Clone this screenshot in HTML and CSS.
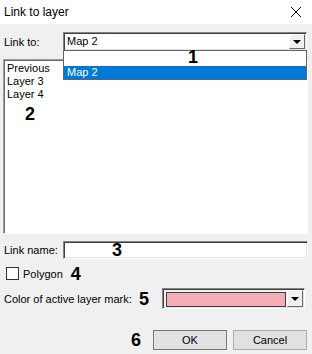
FILE: index.html
```html
<!DOCTYPE html>
<html lang="en">

<head>
	<meta charset="UTF-8">
	<meta name="viewport" content="width=device-width, initial-scale=1.0">
	<title>Link to layer</title>
	<link rel="stylesheet" href="styles.css">
</head>

<body>
	<div class="dialog">
		<div class="titlebar">
			<span class="title">Link to layer</span>
			<svg class="close" width="12" height="12" viewBox="0 0 12 12">
				<path d="M1 1 L11 11 M11 1 L1 11" stroke="#000" stroke-width="1" fill="none" />
			</svg>
		</div>

		<div class="content">
			<div class="row row-link">
				<span class="label">Link to:</span>
				<div class="combo combo-link">
					<span class="combo-text">Map 2</span>
					<span class="drop-btn"><span class="arrow"></span></span>
					<ul class="drop-list">
						<li class="blank"></li>
						<li class="selected">Map 2</li>
					</ul>
					<span class="mark mark-1">1</span>
				</div>
			</div>

			<div class="listbox">
				<div class="item">Previous</div>
				<div class="item">Layer 3</div>
				<div class="item">Layer 4</div>
				<span class="mark mark-2">2</span>
			</div>

			<div class="row row-name">
				<span class="label">Link name:</span>
				<div class="textbox">
					<span class="mark mark-3">3</span>
				</div>
			</div>

			<div class="row row-polygon">
				<span class="checkbox"></span>
				<span class="check-label">Polygon</span>
				<span class="mark mark-4">4</span>
			</div>

			<div class="row row-color">
				<span class="label">Color of active layer mark:</span>
				<span class="mark mark-5">5</span>
				<div class="combo combo-color">
					<span class="swatch"></span>
					<span class="drop-btn"><span class="arrow"></span></span>
				</div>
			</div>

			<div class="row row-buttons">
				<span class="mark mark-6">6</span>
				<button class="btn btn-ok">OK</button>
				<button class="btn">Cancel</button>
			</div>
		</div>
	</div>
</body>

</html>
```

FILE: styles.css
```css
body {
	margin: 0;
	font-family: "Liberation Sans", Arial, sans-serif;
	font-size: 11px;
	color: #000;
	background-color: #f0f0f0;
}

.dialog {
	width: 312px;
	height: 354px;
	background-color: #f0f0f0;
	overflow: hidden;
}

.titlebar {
	height: 24px;
	background-color: #fff;
	display: flex;
	align-items: center;
	justify-content: space-between;
	padding: 0 10px 0 4px;
}

.title {
	font-size: 12px;
}

.close {
	display: block;
}

.content {
	padding: 0 4px 0 3px;
}

.row {
	display: flex;
	align-items: center;
}

.label {
	padding-left: 1px;
	flex: none;
}

.mark {
	font-size: 18px;
	font-weight: bold;
	line-height: 18px;
}

/* link to */
.row-link {
	margin-top: 8px;
}

.row-link .label {
	width: 59px;
}

.combo {
	position: relative;
	box-sizing: border-box;
	background-color: #fff;
	border: 1px solid;
	border-color: #838383 #fff #fff #838383;
	box-shadow: inset 1px 1px 0 #404040, inset -1px -1px 0 #e3e3e3;
}

.combo-link {
	width: 244px;
	height: 19px;
	margin-right: 1px;
}

.combo-text {
	display: block;
	padding: 2px 0 0 3px;
	line-height: 13px;
}

.drop-btn {
	position: absolute;
	top: 1px;
	right: 1px;
	bottom: 1px;
	width: 16px;
	box-sizing: border-box;
	background-color: #f0f0f0;
	border: 1px solid;
	border-color: #fff #696969 #696969 #fff;
	display: flex;
	align-items: center;
	justify-content: center;
}

.arrow {
	width: 0;
	height: 0;
	border-left: 4px solid transparent;
	border-right: 4px solid transparent;
	border-top: 4px solid #000;
	margin-top: 1px;
}

.drop-list {
	position: absolute;
	top: 100%;
	left: -1px;
	right: -1px;
	margin: 0;
	padding: 0;
	list-style: none;
	background-color: #fff;
	border: 1px solid #646464;
	z-index: 2;
}

.drop-list li {
	height: 13px;
	line-height: 13px;
	padding-left: 3px;
}

.drop-list .blank {
	height: 15px;
}

.drop-list .selected {
	background-color: #0078d7;
	color: #fff;
}

.mark-1 {
	position: absolute;
	left: 124px;
	top: 15px;
	z-index: 3;
}

/* list */
.listbox {
	position: relative;
	margin-top: 8px;
	height: 175px;
	box-sizing: border-box;
	background-color: #fff;
	border: 1px solid;
	border-color: #a0a0a0 #fff #fff #a0a0a0;
	box-shadow: inset 1px 1px 0 #696969;
	padding: 2px 0 0 3px;
}

.item {
	line-height: 13px;
}

.mark-2 {
	position: absolute;
	left: 21px;
	top: 45px;
}

/* link name */
.row-name {
	margin-top: 7px;
}

.row-name .label {
	width: 59px;
}

.textbox {
	position: relative;
	flex: 1;
	height: 18px;
	box-sizing: border-box;
	background-color: #fff;
	border: 1px solid;
	border-color: #838383 #fff #fff #838383;
	box-shadow: inset 1px 1px 0 #404040, inset -1px -1px 0 #e3e3e3;
}

.mark-3 {
	position: absolute;
	left: 48px;
	top: -1px;
}

/* polygon */
.row-polygon {
	margin-top: 8px;
	height: 13px;
}

.checkbox {
	width: 13px;
	height: 13px;
	box-sizing: border-box;
	margin-left: 3px;
	background-color: #fff;
	border: 1px solid #333;
}

.check-label {
	margin-left: 4px;
}

.mark-4 {
	margin-left: 8px;
}

/* color */
.row-color {
	margin-top: 8px;
}

.mark-5 {
	margin-left: auto;
	margin-right: 13px;
}

.combo-color {
	width: 143px;
	height: 21px;
	margin-right: 3px;
	background-color: #f0f0f0;
}

.swatch {
	position: absolute;
	left: 3px;
	top: 3px;
	right: 18px;
	bottom: 1px;
	background-color: #f2adb6;
	border: 1px solid #404040;
}

/* buttons */
.row-buttons {
	margin-top: 21px;
	justify-content: flex-end;
	gap: 6px;
	padding-right: 1px;
}

.mark-6 {
	margin-right: 6px;
}

.btn {
	width: 74px;
	height: 20px;
	margin: 0;
	padding: 0;
	font-family: "Liberation Sans", Arial, sans-serif;
	font-size: 11px;
	color: #000;
	background-color: #e1e1e1;
	border: 1px solid #adadad;
}

.btn-ok {
	border-color: #7a7a7a;
}
```
